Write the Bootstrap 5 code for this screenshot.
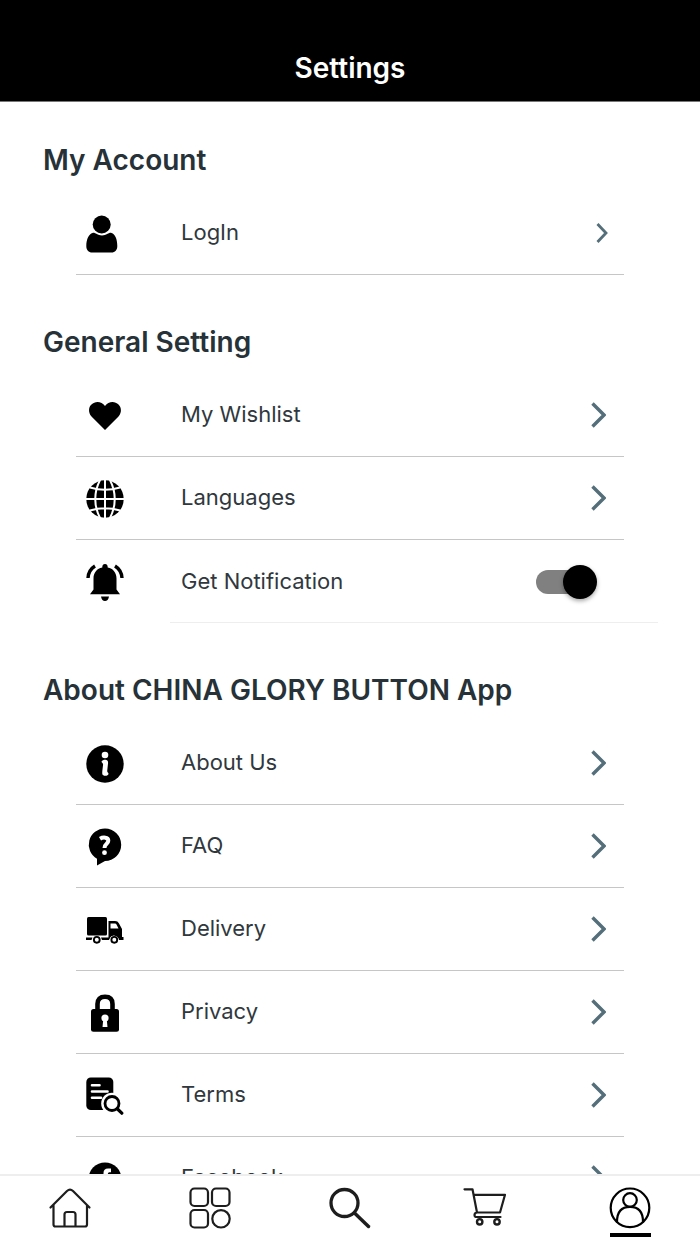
<!DOCTYPE html>
<html lang="en">
<head>
<meta charset="utf-8">
<meta name="viewport" content="width=device-width, initial-scale=1">
<title>Settings</title>
<link href="https://cdn.jsdelivr.net/npm/bootstrap@5.3.0/dist/css/bootstrap.min.css" rel="stylesheet">
<style>
  body { font-family: Inter, "Liberation Sans", sans-serif; color: #263238; background: #fff; }
  .app-bar { background: #000; color: #fff; padding: 48px 16px 13px; border-bottom: 1px solid #777; }
  .app-bar h1 { font-size: 28px; line-height: 40px; font-weight: 600; }
  .scroller { min-height: 0; scrollbar-width: none; }
  .scroller::-webkit-scrollbar { display: none; }
  .group { padding: 42px 0 9px; }
  .group h2 { font-size: 28px; line-height: 32px; font-weight: 600; margin: 0 43px 16px; }
  .options { margin: 0 76px; }
  .option { height: 83px; padding: 0 18px 0 10px; border-bottom: 1px solid #c6c6c6; color: #30383d; font-size: 22px; line-height: 32px; }
  .option > svg { flex: none; }
  .option > span, .option > label { padding-bottom: 2px; }
  .option .pic { width: 38px; height: 38px; margin: 2px 57px 0 0; fill: #000; }
  .option .go { width: 15px; height: 26px; fill: none; stroke: #546e7a; stroke-width: 3.400; }
  .option .go-small { width: 12px; height: 20px; margin-right: -2px; stroke-width: 2.800; }
  .option-toggle { position: relative; border-bottom: 0; padding-right: 27px; }
  .option-toggle::after { content: ""; position: absolute; left: 94px; right: -34px; bottom: 0; border-bottom: 1px solid #eee; }
  .toggle { appearance: none; position: relative; width: 61px; height: 34px; margin: 0; cursor: pointer; }
  .toggle::before { content: ""; position: absolute; inset: 5px 3px 5px 0; border-radius: 12px; background: #808080; }
  .toggle::after { content: ""; position: absolute; top: 0; left: 0; width: 34px; height: 34px; border-radius: 50%; background: #666; box-shadow: 0 2px 4px rgba(0,0,0,.35); }
  .toggle:checked::after { left: auto; right: 0; background: #000; }
  .tabs { border-top: 2px solid #eee; background: #fff; padding: 10px 0 7px; }
  .tabs svg { width: 42px; height: 42px; overflow: visible; fill: none; stroke: #1d1d1d; stroke-width: 2.200; stroke-linecap: round; stroke-linejoin: round; }
  .tabs a { padding-bottom: 9px; }
  .tabs a.active { padding-bottom: 0; }
  .tabs a.active svg { stroke: #000; }
  .tabs a.active::after { content: ""; width: 41px; height: 4px; margin-top: 5px; background: #000; }
</style>
</head>
<body>
<div class="d-flex flex-column vh-100">
  <header class="app-bar text-center"><h1 class="m-0">Settings</h1></header>

  <main class="scroller flex-grow-1 overflow-auto">
    <section class="group">
      <h2>My Account</h2>
      <div class="options">
        <a href="#login" class="option d-flex align-items-center text-decoration-none">
          <svg class="pic" viewBox="0 0 38 38"><circle cx="15.700" cy="9.500" r="9"/><path d="M6.500 18C9 17 11 20.500 16 20.500S23 17 25.500 18C29 19 31.300 24 31.300 31C31.300 35 29 37.500 25.500 37.500H6.300C2.500 37.500.3 35 .3 31C.3 24 3 19 6.500 18Z"/></svg>
          <span class="flex-grow-1">LogIn</span>
          <svg class="go go-small" viewBox="0 0 12 20"><path d="M1.500 1L10 10L1.500 19"/></svg>
        </a>
      </div>
    </section>

    <section class="group">
      <h2>General Setting</h2>
      <div class="options">
        <a href="#wishlist" class="option d-flex align-items-center text-decoration-none">
          <svg class="pic" viewBox="0 0 38 38"><path d="M19 33L5.500 19.500C2 15.500 2.500 10 5.500 7.500C9 4 15.500 4 19 9C22.500 4 29 4 32.500 7.500C35.500 10.500 36 15.500 32.500 19.500Z"/></svg>
          <span class="flex-grow-1">My Wishlist</span>
          <svg class="go" viewBox="0 0 15 26"><path d="M1.500 1.500L13 13L1.500 24.500"/></svg>
        </a>
        <a href="#languages" class="option d-flex align-items-center text-decoration-none">
          <svg class="pic" viewBox="0 0 38 38"><circle cx="19" cy="19" r="18.700"/><g fill="none" stroke="#fff" stroke-width="2"><path d="M19 0V38M0 19H38M4 7.500Q19 12 34 7.500M4 30.500Q19 26 34 30.500"/><path d="M14 0Q4.500 19 14 38M24 0Q33.500 19 24 38"/></g></svg>
          <span class="flex-grow-1">Languages</span>
          <svg class="go" viewBox="0 0 15 26"><path d="M1.500 1.500L13 13L1.500 24.500"/></svg>
        </a>
        <div class="option option-toggle d-flex align-items-center">
          <svg class="pic" viewBox="0 0 38 38"><path d="M19 0C21 0 21.800 1.500 21.700 3.500C27 4.500 30.500 8.500 30.500 14.500V25.500L34 30.300H4L7.500 25.500V14.500C7.500 8.500 11 4.500 16.300 3.500C16.200 1.500 17 0 19 0ZM15 32.500H23C22.500 35.500 21 37 19 37S15.500 35.500 15 32.500Z"/><path d="M9 2Q2.500 6 2 14M29 2Q35.500 6 36 14" fill="none" stroke="#000" stroke-width="3.400"/></svg>
          <label class="flex-grow-1" for="notify">Get Notification</label>
          <input class="toggle" type="checkbox" role="switch" id="notify" checked>
        </div>
      </div>
    </section>

    <section class="group">
      <h2>About CHINA GLORY BUTTON App</h2>
      <div class="options">
        <a href="#about" class="option d-flex align-items-center text-decoration-none">
          <svg class="pic" viewBox="0 0 38 38"><circle cx="19" cy="19" r="18.700"/><g fill="#fff"><circle cx="19" cy="10" r="3.300"/><path d="M15.500 16.500C16.500 14.800 19 14.500 20.500 15C22.300 15.600 22.200 17.500 21.900 19.500L21.200 26C21.200 27.500 22.500 27.500 22.500 28.800C22.300 31 18.500 31.500 17 30C15.800 29 16.300 26.500 16.500 24.500L17.100 19.500C17.200 18 15.500 18 15.500 16.500Z"/></g></svg>
          <span class="flex-grow-1">About Us</span>
          <svg class="go" viewBox="0 0 15 26"><path d="M1.500 1.500L13 13L1.500 24.500"/></svg>
        </a>
        <a href="#faq" class="option d-flex align-items-center text-decoration-none">
          <svg class="pic" viewBox="0 0 38 38"><path d="M19 .5A16.200 16.200 0 1 1 19 32.900L11 37.500V30.800A16.200 16.200 0 0 1 19 .5Z"/><path d="M14 10.800C17 9 22.300 9 22.300 12.800C22.300 16 18.500 15.500 18.500 20" fill="none" stroke="#fff" stroke-width="4"/><circle cx="18.500" cy="24.700" r="2.400" fill="#fff"/></svg>
          <span class="flex-grow-1">FAQ</span>
          <svg class="go" viewBox="0 0 15 26"><path d="M1.500 1.500L13 13L1.500 24.500"/></svg>
        </a>
        <a href="#delivery" class="option d-flex align-items-center text-decoration-none">
          <svg class="pic" viewBox="0 0 38 38"><rect x="1" y="6" width="20" height="18.500" rx="1.500"/><path fill-rule="evenodd" d="M22.500 10H29C31 10 32 10.800 33 12.500L36 18V26H37.500V29H33A5 5 0 0 0 23.500 27.500H22.500ZM24.500 12.500V17.500H32.500L30.500 13.500Q30 12.500 29 12.500Z"/><path d="M0 26.500H6.500L5.500 29H0ZM15 26.500H24L23 29H16Z"/><g fill="#fff" stroke="#000" stroke-width="1.900"><circle cx="10.800" cy="28.800" r="2.900"/><circle cx="28.300" cy="28.800" r="2.900"/></g></svg>
          <span class="flex-grow-1">Delivery</span>
          <svg class="go" viewBox="0 0 15 26"><path d="M1.500 1.500L13 13L1.500 24.500"/></svg>
        </a>
        <a href="#privacy" class="option d-flex align-items-center text-decoration-none">
          <svg class="pic" viewBox="0 0 38 38"><rect x="5" y="15" width="28" height="22.800" rx="2.500"/><path d="M11.500 17V10Q11.500 2.800 19 2.800T26.500 10V17" fill="none" stroke="#000" stroke-width="4.600"/><circle cx="19" cy="24" r="3.600" fill="#fff"/><path d="M17.300 25H20.700L21.500 33H16.500Z" fill="#fff"/></svg>
          <span class="flex-grow-1">Privacy</span>
          <svg class="go" viewBox="0 0 15 26"><path d="M1.500 1.500L13 13L1.500 24.500"/></svg>
        </a>
        <a href="#terms" class="option d-flex align-items-center text-decoration-none">
          <svg class="pic" viewBox="0 0 38 38"><rect x=".3" y=".5" width="27" height="32.500" rx="4.500"/><path d="M6 8.300H13.500M6 14.500H21.500M6 20.800H15" stroke="#fff" stroke-width="2.600" stroke-linecap="round"/><circle cx="26" cy="26.500" r="10.800" fill="#fff"/><g fill="none" stroke="#000" stroke-linecap="round"><circle cx="26" cy="26.500" r="7" stroke-width="2.800"/><path d="M31.500 32L35.800 36.200" stroke-width="3.200"/></g></svg>
          <span class="flex-grow-1">Terms</span>
          <svg class="go" viewBox="0 0 15 26"><path d="M1.500 1.500L13 13L1.500 24.500"/></svg>
        </a>
        <a href="#facebook" class="option d-flex align-items-center text-decoration-none">
          <svg class="pic" viewBox="0 0 38 38"><circle cx="19" cy="19" r="16.500"/><path d="M25 8.500H22Q17.500 8.500 17.500 13V17H14V21H17.500V35H21.800V21H25V17H21.800V14Q21.800 12.300 23.500 12.300H25Z" fill="#fff"/></svg>
          <span class="flex-grow-1">Facebook</span>
          <svg class="go" viewBox="0 0 15 26"><path d="M1.500 1.500L13 13L1.500 24.500"/></svg>
        </a>
      </div>
    </section>
  </main>

  <nav class="tabs row g-0 flex-shrink-0" aria-label="Main">
    <a href="#home" class="col d-flex flex-column align-items-center" aria-label="Home">
      <svg viewBox="0 0 42 42"><path d="M1.500 21.500L18 5Q21 2.300 24 5L40.500 21.500M4.500 19V38.500Q4.500 40.500 6.500 40.500H36Q38 40.500 38 38.500V19M15.500 40.500V28.500Q15.500 26 18 26H24Q26.500 26 26.500 28.500V40.500"/></svg>
    </a>
    <a href="#categories" class="col d-flex flex-column align-items-center" aria-label="Categories">
      <svg viewBox="0 0 42 42"><rect x="1.500" y="2.500" width="17.500" height="17.500" rx="4"/><rect x="23" y="2.500" width="17.500" height="17.500" rx="4"/><rect x="1.500" y="24" width="17.500" height="17.500" rx="4"/><circle cx="32" cy="32.800" r="8.700"/></svg>
    </a>
    <a href="#search" class="col d-flex flex-column align-items-center" aria-label="Search">
      <svg viewBox="0 0 42 42"><circle cx="15.500" cy="17" r="13.500" stroke-width="3.300"/><path d="M25.500 27L39.500 40.500" stroke-width="3.500"/></svg>
    </a>
    <a href="#cart" class="col d-flex flex-column align-items-center" aria-label="Cart">
      <svg viewBox="0 0 42 42"><path d="M-4.500 3.300H3.500L8 26.500H31L36 8.800H5M8 26.500Q5.500 26.800 5.500 29T8 31H31.500"/><g stroke-width="2.400"><circle cx="10.700" cy="35.800" r="2.700"/><circle cx="28" cy="35.800" r="2.700"/></g></svg>
    </a>
    <a href="#profile" class="col d-flex flex-column align-items-center active" aria-label="Profile" aria-current="page">
      <svg viewBox="0 0 42 42"><circle cx="21" cy="21.800" r="19.300"/><circle cx="21" cy="14" r="6.800"/><path d="M8 35.800C8 25 13 20.800 21 20.800S34 25 34 35.800"/></svg>
    </a>
  </nav>
</div>
<script src="https://cdn.jsdelivr.net/npm/bootstrap@5.3.0/dist/js/bootstrap.bundle.min.js"></script>
</body>
</html>
